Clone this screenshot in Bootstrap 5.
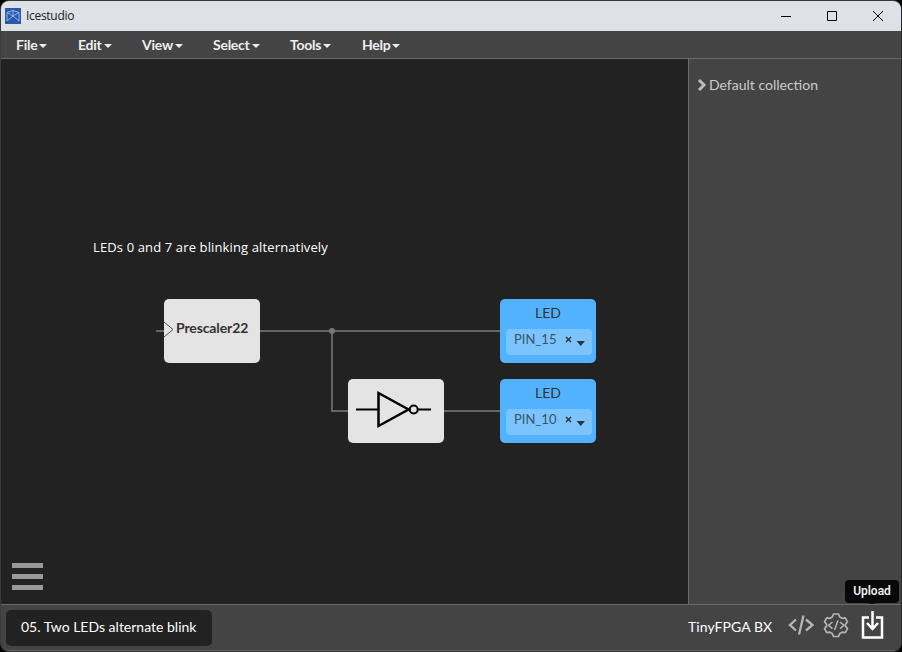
<!DOCTYPE html>
<html lang="en">
<head>
<meta charset="utf-8">
<title>Icestudio</title>
<link href="https://cdn.jsdelivr.net/npm/bootstrap@5.3.0/dist/css/bootstrap.min.css" rel="stylesheet">
<style>
html,body{height:100%;margin:0;background:#000;overflow:hidden}
body{font-family:Lato,"Noto Sans",sans-serif;font-size:14px;line-height:20px;color:#fff}
svg{display:block;flex:none}
.app-window{width:902px;height:652px;border:1px solid #3b393b;border-right-color:#2b2b2b;border-radius:9px;overflow:hidden;background:#444}
.title-bar{height:30px;background:#dee1e6;color:#222;font:12px/30px "Open Sans",sans-serif;padding-left:4px}
.title-bar .caption-text{letter-spacing:-.3px;margin-left:5px}
.caption-btn{width:46px;height:28px;display:grid;place-items:center}
.menu-bar{height:28px;background:#444;border-bottom:1px solid #6a6a6a;color:#eee}
.menu-bar .nav-link{padding:0 0 0 15px;color:#eee;line-height:28px;font-size:14px;font-weight:700;letter-spacing:-.25px;white-space:nowrap}
.menu-bar .nav-link::after{margin-left:2px;border-top-width:4px;border-left-width:4px;border-right-width:4px;vertical-align:2px}
.m1{width:62px}.m2{width:64px}.m3{width:71px}.m4{width:77px}.m5{width:72px}
.workspace{height:545px}
.canvas-area{width:687px;background:#222}
.side-panel{border-left:1px solid #6a6a6a;background:#444;color:#ccc;padding:16px 0 0 8px;font-size:14px}
.node{position:absolute;width:96px;height:64px;border-radius:5px;background:#e4e4e4;color:#333}
.node-title{font-weight:700;letter-spacing:-.12px}
.node-led{background:#52b2ff;text-align:center;padding-top:4px}
.pin-select{height:26px;margin:6px 4px 0 6px;border-radius:4px;background:#7cc4ff;color:#3a5369;padding:0 4px 0 8px;line-height:21px;font-size:13px}
.wires,.note,.burger{position:absolute}
.note{left:92px;top:178px;font:500 13px/20px "Open Sans",sans-serif;letter-spacing:.13px;white-space:nowrap}
.burger{left:11px;top:504px;width:31px;height:27px}
.burger span{height:5px;background:#999}
.status-bar{height:47px;background:#444;border-top:1px solid #6a6a6a;border-bottom:1px solid #606060;padding-left:5px}
.project-tag{height:36px;width:206px;margin-top:5px;background:#222;border-radius:5px;line-height:33px;padding-left:15px;white-space:nowrap}
.board-label{line-height:43px;width:100px;white-space:nowrap;letter-spacing:.08px}
.tip{position:absolute;left:845px;top:580px;width:54px;height:23px;border-radius:4px;background:#080808;color:#eee;font:600 12px/22px Roboto,"Liberation Sans",sans-serif;text-align:center}
.tip::after{content:"";position:absolute;left:22px;top:23px;border:5px solid transparent;border-top:1px solid #080808;border-bottom:0}
</style>
</head>
<body>
<div class="app-window d-flex flex-column">
 <header class="title-bar d-flex align-items-center">
  <svg width="16" height="16" viewBox="0 0 16 16"><path fill="#2859aa" d="M0 0h16v16H0z"/><path d="M2 4.500 8 2.500l6 2V13l-6-5-6 5zM2 4.500 8 8l6-3.500M8 2.500V8" fill="none" stroke="#9fbde9" stroke-width=".9"/></svg>
  <span class="caption-text">Icestudio</span>
  <div class="ms-auto d-flex">
   <div class="caption-btn"><svg width="10" height="10"><path d="M0 5.5h10" stroke="#000"/></svg></div>
   <div class="caption-btn"><svg width="10" height="10"><path d="M.5.5h9v9h-9z" fill="none" stroke="#000"/></svg></div>
   <div class="caption-btn"><svg width="10" height="10"><path d="m0 0 10 10M10 0 0 10" stroke="#000"/></svg></div>
  </div>
 </header>
 <nav class="menu-bar d-flex">
  <a class="nav-link dropdown-toggle m1">File</a><a class="nav-link dropdown-toggle m2">Edit</a><a class="nav-link dropdown-toggle m3">View</a><a class="nav-link dropdown-toggle m4">Select</a><a class="nav-link dropdown-toggle m5">Tools</a><a class="nav-link dropdown-toggle">Help</a>
 </nav>
 <main class="workspace d-flex">
  <section class="canvas-area position-relative">
   <svg class="wires top-0 start-0" width="687" height="545" fill="none" stroke="#646464" stroke-width="2"><path d="M155 272h8M259 272h240M331 272v80h16M443 352h56"/><circle cx="331" cy="272" r="3" fill="#777" stroke="none"/></svg>
   <div class="note">LEDs 0 and 7 are blinking alternatively</div>
   <div class="node" style="left:163px;top:240px">
    <div class="d-flex align-items-center" style="padding-top:19px"><svg width="12" height="20"><path d="m0 4 9 7.500-9 7.500" fill="none" stroke="#555"/></svg><span class="node-title">Prescaler22</span></div>
   </div>
   <div class="node" style="left:347px;top:320px"><svg width="96" height="64" fill="none" stroke="#000" stroke-width="2"><path d="M8 30.5h22M70 30.5h13"/><path d="m30.500 14 30 16.500-30 16.500z" stroke-width="2.5"/><circle cx="65.700" cy="30.5" r="4" /></svg></div>
   <div class="node node-led" style="left:499px;top:240px">LED
    <div class="pin-select d-flex"><span>PIN_15</span><svg class="ms-auto" width="24" height="26"><path d="m2 8 5 5M7 8l-5 5" stroke="#333" stroke-width="1.5"/><path d="M12.500 12h8.500l-4.250 5z" fill="#333"/></svg></div>
   </div>
   <div class="node node-led" style="left:499px;top:320px">LED
    <div class="pin-select d-flex"><span>PIN_10</span><svg class="ms-auto" width="24" height="26"><path d="m2 8 5 5M7 8l-5 5" stroke="#333" stroke-width="1.5"/><path d="M12.500 12h8.500l-4.250 5z" fill="#333"/></svg></div>
   </div>
   <div class="burger d-flex flex-column justify-content-between"><span></span><span></span><span></span></div>
  </section>
  <aside class="side-panel flex-grow-1">
   <div class="d-flex align-items-center"><svg width="12" height="14"><path d="m2 2 5 5-5 5" fill="none" stroke="#bbb" stroke-width="3"/></svg><span>Default collection</span></div>
  </aside>
 </main>
 <footer class="status-bar d-flex">
  <div class="project-tag">05. Two LEDs alternate blink</div>
  <div class="board-label ms-auto">TinyFPGA BX</div>
  <svg width="113" height="45" viewBox="788 605 113 45" fill="none" stroke="#b5b5b5" stroke-width="2">
   <path d="m796 619.500-6 5.500 6 5.500M806 619.500l6.500 5.500-6.500 5.500M803.500 615.500l-4.500 19" stroke-width="2.300"/>
   <path stroke-width="1.700" stroke-linejoin="round" d="M833.500 614h5l1.300 3 2.200 1.300 3.300-.5 2.200 4-2 2.500v1.800l2 2.500-2.200 4-3.300-.4-2.200 1.300-1.300 3h-5l-1.300-3-2.200-1.300-3.300.4-2.200-4 2-2.500v-1.800l-2-2.500 2.200-4 3.300.5 2.200-1.300z"/>
   <path stroke-width="1.500" d="m832.500 622-4 3.300 4 3.300M840 622l4 3.300-4 3.300M838 620.500l-3.500 9.500"/>
   <path stroke="#fff" stroke-width="2.500" d="M869 617.500h-6v20h19v-20h-6M872.500 611v18M867 623l5.500 6 5.500-6"/>
  </svg>
 </footer>
</div>
<div class="tip">Upload</div>
<script src="https://cdn.jsdelivr.net/npm/bootstrap@5.3.0/dist/js/bootstrap.bundle.min.js"></script>
</body>
</html>
